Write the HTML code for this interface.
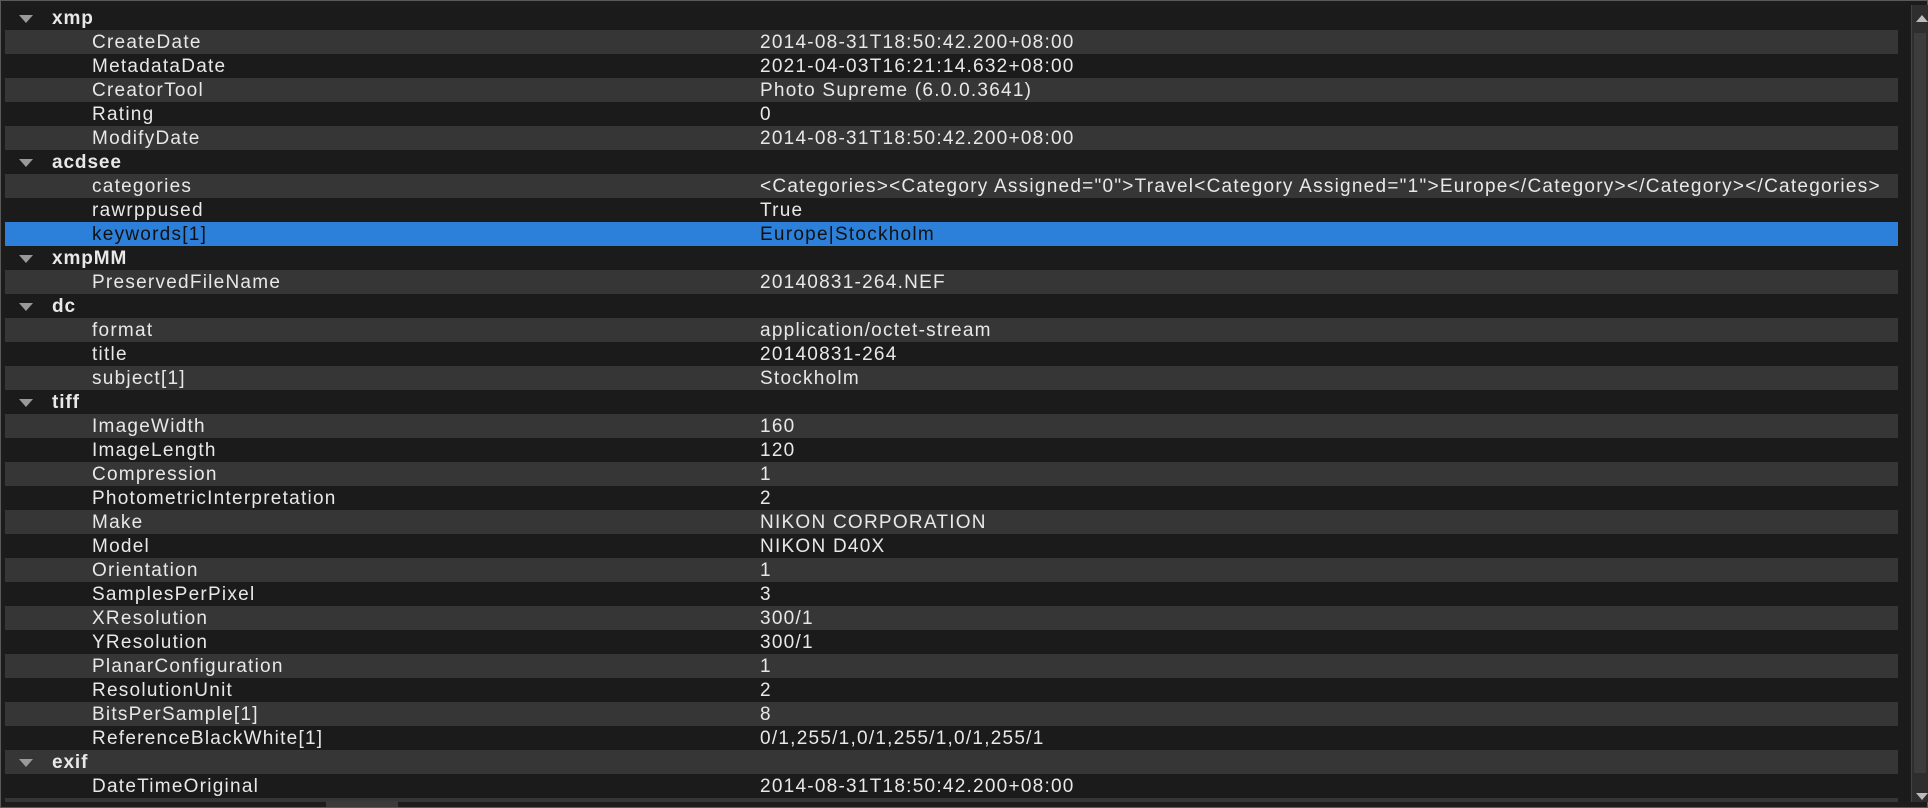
<!DOCTYPE html><html><head><style>
html,body{margin:0;padding:0;width:1928px;height:808px;overflow:hidden;background:#2a2a2a;font-family:"Liberation Sans",sans-serif;}
#frame{position:absolute;left:0;top:0;width:1926px;height:806px;border:1px solid #5a5a5a;background:#1c1c1c;}
#list{position:absolute;left:5px;top:6px;width:1904px;height:796px;overflow:hidden;background:#1b1b1b;}
.r{position:relative;height:24px;width:1893px;color:#e8e8e8;font-size:19px;letter-spacing:1.25px;line-height:25px;white-space:nowrap;}
.r.l{background:#363636}
.r.s{background:#2c80da;color:#111}
.n{position:absolute;left:87px}
.v{position:absolute;left:755px}
.h{position:absolute;left:47px;font-weight:bold;letter-spacing:0.9px}
.t{position:absolute;left:14px;top:9px;width:0;height:0;border-left:7px solid transparent;border-right:7px solid transparent;border-top:8px solid #9a9a9a}
#sb{position:absolute;left:1911px;top:5px;width:16px;height:797px;background:#2e2e2e;border-left:1px solid #444}
#sb .th{position:absolute;left:2px;top:28px;width:12px;height:740px;background:#3c3c3c}
#sb .up{position:absolute;left:4px;top:10px;border-left:6px solid transparent;border-right:6px solid transparent;border-bottom:7px solid #bbb}
#sb .dn{position:absolute;left:4px;top:788px;border-left:6px solid transparent;border-right:6px solid transparent;border-top:7px solid #bbb}
#hs{position:absolute;left:326px;top:801px;width:72px;height:6px;background:#3a3a3a}
</style></head><body><div id="frame"></div>
<div id="list">
<div class="r"><span class="t"></span><span class="h">xmp</span></div>
<div class="r l"><span class="n">CreateDate</span><span class="v">2014-08-31T18:50:42.200+08:00</span></div>
<div class="r"><span class="n">MetadataDate</span><span class="v">2021-04-03T16:21:14.632+08:00</span></div>
<div class="r l"><span class="n">CreatorTool</span><span class="v">Photo Supreme (6.0.0.3641)</span></div>
<div class="r"><span class="n">Rating</span><span class="v">0</span></div>
<div class="r l"><span class="n">ModifyDate</span><span class="v">2014-08-31T18:50:42.200+08:00</span></div>
<div class="r"><span class="t"></span><span class="h">acdsee</span></div>
<div class="r l"><span class="n">categories</span><span class="v">&lt;Categories&gt;&lt;Category Assigned="0"&gt;Travel&lt;Category Assigned="1"&gt;Europe&lt;/Category&gt;&lt;/Category&gt;&lt;/Categories&gt;</span></div>
<div class="r"><span class="n">rawrppused</span><span class="v">True</span></div>
<div class="r s"><span class="n">keywords[1]</span><span class="v">Europe|Stockholm</span></div>
<div class="r"><span class="t"></span><span class="h">xmpMM</span></div>
<div class="r l"><span class="n">PreservedFileName</span><span class="v">20140831-264.NEF</span></div>
<div class="r"><span class="t"></span><span class="h">dc</span></div>
<div class="r l"><span class="n">format</span><span class="v">application/octet-stream</span></div>
<div class="r"><span class="n">title</span><span class="v">20140831-264</span></div>
<div class="r l"><span class="n">subject[1]</span><span class="v">Stockholm</span></div>
<div class="r"><span class="t"></span><span class="h">tiff</span></div>
<div class="r l"><span class="n">ImageWidth</span><span class="v">160</span></div>
<div class="r"><span class="n">ImageLength</span><span class="v">120</span></div>
<div class="r l"><span class="n">Compression</span><span class="v">1</span></div>
<div class="r"><span class="n">PhotometricInterpretation</span><span class="v">2</span></div>
<div class="r l"><span class="n">Make</span><span class="v">NIKON CORPORATION</span></div>
<div class="r"><span class="n">Model</span><span class="v">NIKON D40X</span></div>
<div class="r l"><span class="n">Orientation</span><span class="v">1</span></div>
<div class="r"><span class="n">SamplesPerPixel</span><span class="v">3</span></div>
<div class="r l"><span class="n">XResolution</span><span class="v">300/1</span></div>
<div class="r"><span class="n">YResolution</span><span class="v">300/1</span></div>
<div class="r l"><span class="n">PlanarConfiguration</span><span class="v">1</span></div>
<div class="r"><span class="n">ResolutionUnit</span><span class="v">2</span></div>
<div class="r l"><span class="n">BitsPerSample[1]</span><span class="v">8</span></div>
<div class="r"><span class="n">ReferenceBlackWhite[1]</span><span class="v">0/1,255/1,0/1,255/1,0/1,255/1</span></div>
<div class="r l"><span class="t"></span><span class="h">exif</span></div>
<div class="r"><span class="n">DateTimeOriginal</span><span class="v">2014-08-31T18:50:42.200+08:00</span></div>
<div class="r l"><span class="n">ExposureTime</span><span class="v">10/1000</span></div>
</div>
<div id="sb"><div class="th"></div><div class="up"></div><div class="dn"></div></div>
<div id="hs"></div>
</body></html>
